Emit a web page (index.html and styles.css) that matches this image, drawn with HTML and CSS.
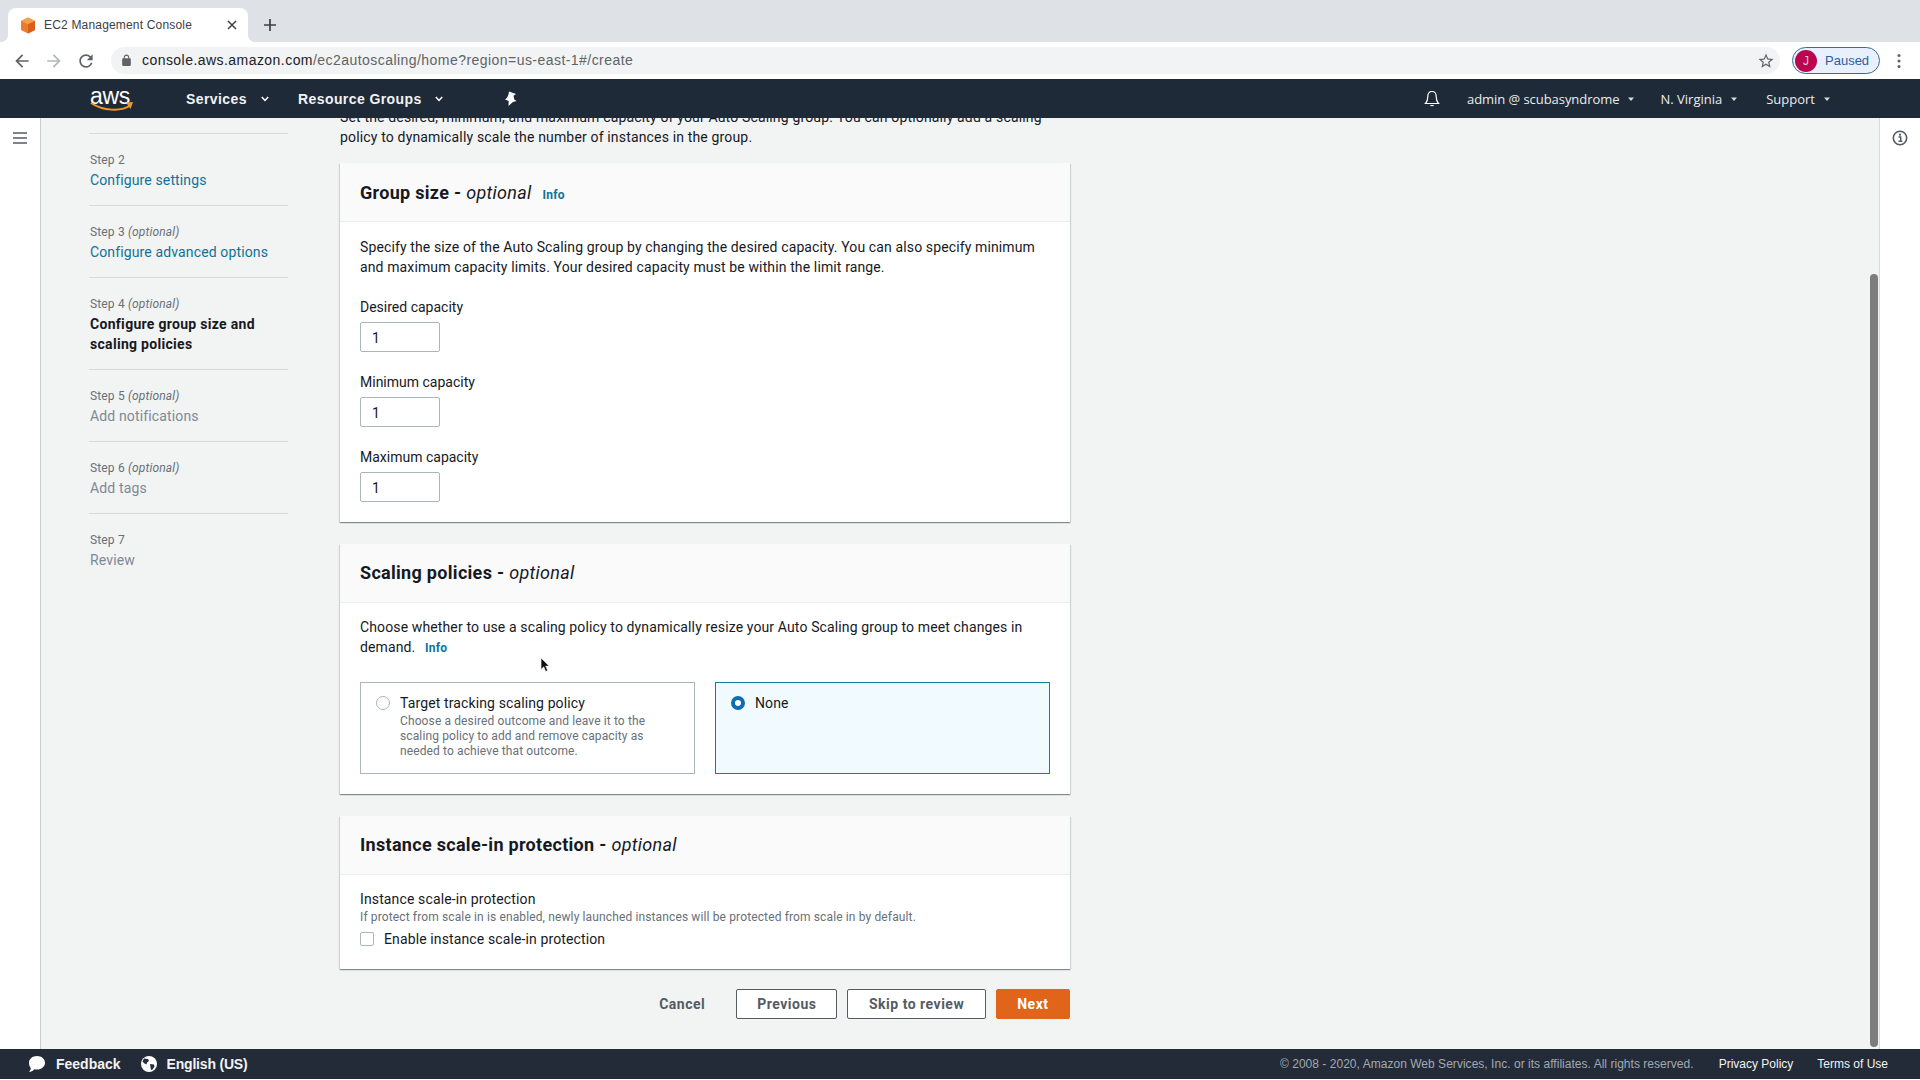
FILE: index.html
```html
<!DOCTYPE html>
<html lang="en">
<head>
<meta charset="utf-8">
<title>EC2 Management Console</title>
<link rel="stylesheet" href="styles.css">
</head>
<body>
<div class="tabstrip">
  <div class="tab">
    <svg class="favicon" viewBox="0 0 16 17"><path fill="#ee7a2c" d="M8 .5l7 3.4v9L8 16.5 1 12.900v-9z"/><path fill="#f6a04d" d="M8 .5l7 3.4L8 7.300 1 3.900z"/><path fill="#d9601c" d="M8 7.300l7-3.400v9L8 16.500z"/></svg>
    <span class="tab-title">EC2 Management Console</span>
    <svg class="tab-x" viewBox="0 0 10 10"><path d="M1 1l8 8M9 1l-8 8" stroke="#3c4043" stroke-width="1.500" fill="none"/></svg>
  </div>
  <svg class="tab-plus" viewBox="0 0 12 12"><path d="M6 0v12M0 6h12" stroke="#3c4043" stroke-width="1.700" fill="none"/></svg>
</div>
<div class="toolbar">
  <svg class="tool-icon" viewBox="0 0 24 24"><path fill="#5f6368" d="M20 11H7.830l5.590-5.590L12 4l-8 8 8 8 1.410-1.410L7.830 13H20v-2z"/></svg>
  <svg class="tool-icon" viewBox="0 0 24 24"><path fill="#b3b6ba" d="M12 4l-1.410 1.410L16.170 11H4v2h12.170l-5.580 5.590L12 20l8-8z"/></svg>
  <svg class="tool-icon" viewBox="0 0 24 24"><path fill="#5f6368" d="M17.650 6.350A7.958 7.958 0 0 0 12 4c-4.420 0-7.990 3.580-7.990 8s3.570 8 7.990 8c3.730 0 6.840-2.550 7.730-6h-2.080A5.990 5.990 0 0 1 12 18c-3.310 0-6-2.690-6-6s2.690-6 6-6c1.660 0 3.140.690 4.220 1.780L13 11h7V4l-2.350 2.350z"/></svg>
  <div class="omnibox">
    <svg class="lock" viewBox="0 0 24 24"><path fill="#5f6368" d="M18 8h-1V6c0-2.760-2.240-5-5-5S7 3.240 7 6v2H6c-1.100 0-2 .9-2 2v10c0 1.100.9 2 2 2h12c1.100 0 2-.9 2-2V10c0-1.100-.9-2-2-2zM9 6c0-1.660 1.340-3 3-3s3 1.340 3 3v2H9V6z"/></svg>
    <span class="url">console.aws.amazon.com<span class="url-path">/ec2autoscaling/home?region=us-east-1#/create</span></span>
    <svg class="star" viewBox="0 0 24 24"><path fill="#5f6368" d="M22 9.240l-7.190-.62L12 2 9.190 8.630 2 9.240l5.460 4.730L5.820 21 12 17.270 18.180 21l-1.630-7.030L22 9.240zM12 15.400l-3.760 2.270 1-4.280-3.320-2.880 4.380-.38L12 6.100l1.710 4.040 4.380.38-3.320 2.880 1 4.280L12 15.400z"/></svg>
  </div>
  <div class="paused"><span class="avatar">J</span><span>Paused</span></div>
  <svg class="dots" viewBox="0 0 4 16"><circle cx="2" cy="2.500" r="1.500" fill="#5f6368"/><circle cx="2" cy="8" r="1.500" fill="#5f6368"/><circle cx="2" cy="13.500" r="1.500" fill="#5f6368"/></svg>
</div>
<header class="awsnav">
  <div class="logo">
    <span class="logo-text">aws</span>
    <svg class="logo-smile" viewBox="0 0 44 11"><path d="M1 2c12 8 30 9 40 2" stroke="#f29a1f" stroke-width="2" fill="none"/><path d="M36 1.500l7-.5-2.500 7" fill="#f29a1f"/></svg>
  </div>
  <span class="nav-bold nav-services">Services</span>
  <svg class="caret caret-services" viewBox="0 0 8 6"><path d="M.8 1l3.200 3.500L7.200 1" stroke="#fff" stroke-width="1.500" fill="none"/></svg>
  <span class="nav-bold nav-rg">Resource Groups</span>
  <svg class="caret caret-rg" viewBox="0 0 8 6"><path d="M.8 1l3.200 3.500L7.200 1" stroke="#fff" stroke-width="1.500" fill="none"/></svg>
  <svg class="pin" viewBox="0 0 14 16"><path fill="#fff" d="M5 .5l7 2.500-2.500 1.800.8 3.700 2.200 1.500-3.500 1-1.800 1.500L4.500 15l.2-5-3.700-1.500L3 6.800l1.500-3.300z"/></svg>
  <span class="nav-spacer"></span>
  <svg class="bell" viewBox="0 0 16 18"><path d="M8 1.500c-3 0-4.200 2.300-4.200 5 0 3.500-.8 5.500-2.300 7h13c-1.500-1.500-2.300-3.500-2.300-7 0-2.700-1.200-5-4.200-5z" stroke="#fff" stroke-width="1.200" fill="none"/><path d="M6 15h4c0 1.600-4 1.600-4 0z" fill="#fff"/></svg>
  <span class="nav-item nav-admin">admin @ scubasyndrome</span>
  <svg class="tri" viewBox="0 0 8 6"><path d="M1 1.500h6L4 5z" fill="#d5dbdb"/></svg>
  <span class="nav-item nav-region">N. Virginia</span>
  <svg class="tri" viewBox="0 0 8 6"><path d="M1 1.500h6L4 5z" fill="#d5dbdb"/></svg>
  <span class="nav-item nav-support">Support</span>
  <svg class="tri" viewBox="0 0 8 6"><path d="M1 1.500h6L4 5z" fill="#d5dbdb"/></svg>
</header>
<main class="main">
  <aside class="drawer-left">
    <svg class="hamburger" viewBox="0 0 14 12"><path d="M0 1h14M0 6h14M0 11h14" stroke="#545b64" stroke-width="1.600" fill="none"/></svg>
  </aside>
  <nav class="steps">
    <ol class="step-list">
      <li class="step"><div class="step-no">Step 2</div><div class="step-link">Configure settings</div></li>
      <li class="step"><div class="step-no">Step 3 <i>(optional)</i></div><div class="step-link">Configure advanced options</div></li>
      <li class="step"><div class="step-no">Step 4 <i>(optional)</i></div><div class="step-current">Configure group size and scaling policies</div></li>
      <li class="step"><div class="step-no">Step 5 <i>(optional)</i></div><div class="step-off">Add notifications</div></li>
      <li class="step"><div class="step-no">Step 6 <i>(optional)</i></div><div class="step-off">Add tags</div></li>
      <li class="step step-last"><div class="step-no">Step 7</div><div class="step-off">Review</div></li>
    </ol>
  </nav>
  <section class="content">
    <p class="intro">Set the desired, minimum, and maximum capacity of your Auto Scaling group. You can optionally add a scaling policy to dynamically scale the number of instances in the group.</p>

    <div class="card card-group">
      <div class="card-head"><h2>Group size - <i>optional</i></h2><a class="info info-head">Info</a></div>
      <div class="card-body">
        <p class="para">Specify the size of the Auto Scaling group by changing the desired capacity. You can also specify minimum and maximum capacity limits. Your desired capacity must be within the limit range.</p>
        <div class="field"><label class="label">Desired capacity</label><div class="input">1</div></div>
        <div class="field"><label class="label">Minimum capacity</label><div class="input">1</div></div>
        <div class="field"><label class="label">Maximum capacity</label><div class="input">1</div></div>
      </div>
    </div>

    <div class="card card-scaling">
      <div class="card-head"><h2>Scaling policies - <i>optional</i></h2></div>
      <div class="card-body">
        <p class="para">Choose whether to use a scaling policy to dynamically resize your Auto Scaling group to meet changes in demand. <a class="info info-inline">Info</a></p>
        <div class="tiles">
          <div class="tile">
            <span class="radio"></span>
            <div><div class="tile-title">Target tracking scaling policy</div><div class="tile-desc">Choose a desired outcome and leave it to the scaling policy to add and remove capacity as needed to achieve that outcome.</div></div>
          </div>
          <div class="tile tile-on">
            <span class="radio radio-on"></span>
            <div><div class="tile-title">None</div></div>
          </div>
        </div>
      </div>
    </div>

    <div class="card card-protect">
      <div class="card-head"><h2>Instance scale-in protection - <i>optional</i></h2></div>
      <div class="card-body">
        <div class="prot-label">Instance scale-in protection</div>
        <div class="prot-desc">If protect from scale in is enabled, newly launched instances will be protected from scale in by default.</div>
        <div class="check-row"><span class="checkbox"></span><span class="check-label">Enable instance scale-in protection</span></div>
      </div>
    </div>

    <div class="actions">
      <span class="btn-link">Cancel</span>
      <span class="btn btn-prev">Previous</span>
      <span class="btn btn-skip">Skip to review</span>
      <span class="btn btn-next">Next</span>
    </div>
  </section>
  <div class="scroll-track"><div class="scroll-thumb"></div></div>
  <aside class="drawer-right">
    <svg class="info-icon" viewBox="0 0 16 16"><circle cx="8" cy="8" r="6.700" stroke="#545b64" stroke-width="1.600" fill="none"/><path d="M6.500 7h2.200v4M6.500 11.300h3.800" stroke="#545b64" stroke-width="1.500" fill="none"/><circle cx="8" cy="4.700" r="1.100" fill="#545b64"/></svg>
  </aside>
  <svg class="cursor" viewBox="0 0 12 18"><path d="M1 1v13l3-3 2.200 5.200 2.200-1-2.200-5H10z" fill="#111" stroke="#fff" stroke-width=".6"/></svg>
</main>
<footer class="footer">
  <svg class="foot-bubble" viewBox="0 0 18 16"><path fill="#fff" d="M9 0c4.500 0 8 2.900 8 6.800s-3.500 6.800-8 6.800c-1 0-1.900-.1-2.700-.4C4.800 15 3 15.800 1 16c1-1 1.600-2.200 1.800-3.800C1.700 11 1 9 1 6.800 1 2.900 4.500 0 9 0z"/></svg>
  <span class="foot-bold foot-feedback">Feedback</span>
  <svg class="foot-globe" viewBox="0 0 16 16"><circle cx="8" cy="8" r="8" fill="#fff"/><path fill="#232f3e" d="M3 2.500l4 .5 1 2-2 1.500-.5 2-2-1-2-2zM9 8l4 .5.5 2-2 3-1.500.5-.5-3z"/></svg>
  <span class="foot-bold foot-lang">English (US)</span>
  <span class="nav-spacer"></span>
  <span class="foot-copy">© 2008 - 2020, Amazon Web Services, Inc. or its affiliates. All rights reserved.</span>
  <span class="foot-link foot-privacy">Privacy Policy</span>
  <span class="foot-link foot-terms">Terms of Use</span>
</footer>
</body>
</html>
```

FILE: styles.css
```css
* { box-sizing: border-box; }
html, body { margin: 0; padding: 0; height: 100%; }
body {
  display: flex;
  flex-direction: column;
  height: 1079px;
  overflow: hidden;
  background: #fff;
  font-family: Roboto, "Liberation Sans", sans-serif;
  font-size: 14px;
  line-height: 20px;
  color: #16191f;
}
svg { display: block; flex: none; }

/* browser chrome */
.tabstrip {
  flex: none;
  height: 42px;
  background: #dee1e6;
  display: flex;
  align-items: flex-end;
  padding-left: 8px;
}
.tab {
  width: 240px;
  height: 34px;
  background: #fff;
  border-radius: 8px 8px 0 0;
  display: flex;
  align-items: center;
  padding-left: 12px;
  position: relative;
}
.tab::before, .tab::after {
  content: "";
  position: absolute;
  bottom: 0;
  width: 8px;
  height: 8px;
}
.tab::before { left: -8px; background: radial-gradient(circle at 0 0, transparent 8px, #fff 8.500px); }
.tab::after { right: -8px; background: radial-gradient(circle at 100% 0, transparent 8px, #fff 8.500px); }
.favicon { width: 16px; height: 17px; }
.tab-title {
  margin-left: 8px;
  font: 12px/16px "Liberation Sans", sans-serif;
  letter-spacing: .18px;
  color: #3c4043;
  white-space: nowrap;
}
.tab-x { width: 10px; height: 10px; margin-left: auto; margin-right: 11px; }
.tab-plus { width: 12px; height: 12px; margin: 0 0 11px 16px; }
.toolbar {
  flex: none;
  height: 37px;
  display: flex;
  align-items: center;
  padding-left: 12px;
  background: #fff;
}
.tool-icon { width: 20px; height: 20px; margin-right: 12px; }
.omnibox {
  width: 1669px;
  height: 27px;
  margin-left: 3px;
  border-radius: 14px;
  background: #f1f3f4;
  display: flex;
  align-items: center;
  padding-left: 9px;
}
.lock { width: 13px; height: 13px; }
.url {
  margin: 0 0 2px 9px;
  font: 14px/20px "Liberation Sans", sans-serif;
  letter-spacing: .45px;
  color: #202124;
  white-space: nowrap;
}
.url-path { color: #5f6368; }
.star { width: 18px; height: 18px; margin-left: auto; margin-right: 5px; }
.paused {
  width: 88px;
  height: 27px;
  margin-left: 12px;
  border: 1px solid #41698f;
  border-radius: 14px;
  background: #e8f0fe;
  display: flex;
  align-items: center;
  padding-left: 2px;
  font: 13px/16px "Liberation Sans", sans-serif;
  color: #2a5e9e;
}
.avatar {
  width: 22px;
  height: 22px;
  border-radius: 50%;
  background: #b9064f;
  color: #f4c6d8;
  font-size: 12px;
  display: flex;
  align-items: center;
  justify-content: center;
  margin-right: 8px;
}
.dots { width: 4px; height: 16px; margin-left: 17px; }

/* aws nav */
.awsnav {
  flex: none;
  height: 39px;
  background: #1f2a38;
  display: flex;
  align-items: center;
  padding-left: 90px;
  color: #fff;
}
.logo { width: 44px; position: relative; height: 26px; }
.logo-text {
  display: block;
  font: 400 23px/20px "Liberation Sans", sans-serif;
  letter-spacing: -.3px;
  color: #fff;
  margin-left: 0;
}
.logo-smile { width: 44px; height: 11px; position: absolute; left: 0; top: 15px; }
.nav-bold { font: 700 14px/20px "Liberation Sans", sans-serif; letter-spacing: .42px; color: #f2f3f3; white-space: nowrap; }
.nav-services { margin-left: 52px; }
.caret { width: 8px; height: 6px; }
.caret-services { margin-left: 14px; }
.nav-rg { margin-left: 29px; }
.caret-rg { margin-left: 13px; }
.pin { width: 14px; height: 16px; margin-left: 61px; }
.nav-spacer { flex: 1; }
.bell { width: 16px; height: 18px; }
.nav-item { font: 13px/20px "Open Sans", sans-serif; color: #eaeded; white-space: nowrap; }
.nav-admin { margin-left: 27px; letter-spacing: -.05px; }
.nav-region { margin-left: 25px; }
.nav-support { margin-left: 28px; }
.tri { width: 8px; height: 6px; margin-left: 8px; }
.awsnav > .tri:last-child { margin-right: 89px; }

/* main */
.main {
  flex: 1;
  min-height: 0;
  display: flex;
  overflow: hidden;
  background: #f2f3f3;
  position: relative;
}
.drawer-left {
  flex: none;
  width: 41px;
  background: #fff;
  border-right: 1px solid #c9cdce;
  padding: 14px 0 0 13px;
}
.hamburger { width: 14px; height: 12px; }
.steps { flex: none; width: 299px; padding: 15px 52px 0 48px; }
.step-list { list-style: none; margin: 0; padding: 0; border-top: 1px solid #d5dbdb; }
.step { padding: 16px 1px 15px 1px; border-bottom: 1px solid #d5dbdb; }
.step-last { border-bottom: 0; }
.step-no { font-size: 12px; letter-spacing: .15px; color: #687078; }
.step-link { color: #0f7299; letter-spacing: .13px; }
.step-current { font-weight: 700; letter-spacing: .3px; color: #16191f; }
.step-off { color: #7d8998; letter-spacing: .14px; }

.content { flex: none; width: 730px; margin-top: -11px; }
.intro { margin: 0 0 16px; letter-spacing: .16px; }
.card {
  background: #fff;
  box-shadow: 0 1px 1px 0 rgba(0,28,36,.35), 1px 1px 1px 0 rgba(0,28,36,.1), -1px 1px 1px 0 rgba(0,28,36,.1);
}
.card-group { height: 359px; margin-bottom: 22px; }
.card-scaling { height: 250px; margin-bottom: 22px; }
.card-protect { height: 153px; }
.card-head {
  height: 59px;
  padding: 0 20px;
  background: #fafafa;
  border-bottom: 1px solid #eaeded;
  display: flex;
  align-items: center;
}
.card-group .card-head { padding-top: 2px; }
h2 { margin: 0; font-size: 18px; line-height: 24px; font-weight: 700; letter-spacing: .3px; }
h2 i { font-weight: 400; }
.card-body { padding: 15px 20px 0; }
.card-scaling .card-body, .card-protect .card-body { padding-top: 14px; }
.para { margin: 0; letter-spacing: .125px; }
.info { font-size: 12px; font-weight: 700; color: #0f7299; letter-spacing: .2px; }
.info-head { margin-left: 11px; margin-top: 4px; }
.info-inline { margin-left: 6px; display: inline-block; line-height: 16px; }
.field { margin-top: 20px; }
.label { display: block; margin-bottom: 5px; }
.input {
  width: 80px;
  height: 30px;
  border: 1px solid #aab7b8;
  border-radius: 2px;
  padding: 5px 11px 0;
  background: #fff;
}
.tiles { display: grid; grid-template-columns: 335px 335px; gap: 20px; margin-top: 25px; }
.tile {
  height: 92px;
  border: 1px solid #aab7b8;
  padding: 10px 15px;
  display: flex;
  align-items: flex-start;
  gap: 10px;
}
.tile-on { background: #f1faff; border-color: #0f7f9a; }
.radio {
  flex: none;
  width: 14px;
  height: 14px;
  margin-top: 3px;
  border-radius: 50%;
  border: 1px solid #aab7b8;
  background: #fff;
}
.radio-on { border: 4px solid #0f6cae; }
.tile-title { letter-spacing: .12px; }
.tile-desc { margin-top: 1px; font-size: 12px; line-height: 15px; letter-spacing: .12px; color: #687078; }
.prot-label { letter-spacing: .13px; }
.prot-desc { font-size: 12px; line-height: 16px; letter-spacing: .13px; color: #687078; }
.check-row { display: flex; align-items: center; gap: 10px; margin-top: 4px; }
.check-label { letter-spacing: .12px; }
.checkbox { width: 14px; height: 14px; border: 1px solid #aab7b8; border-radius: 2px; background: #fff; }
.actions { display: flex; justify-content: flex-end; align-items: center; margin-top: 20px; font-weight: 700; letter-spacing: .5px; }
.btn-link { color: #545b64; margin-right: 21px; }
.btn {
  height: 30px;
  padding: 0 20px;
  border: 1px solid #545b64;
  border-radius: 2px;
  background: #fff;
  color: #545b64;
  line-height: 28px;
  margin-left: 10px;
  white-space: nowrap;
}
.btn-skip { padding: 0 20.500px; }
.btn-next { padding: 0 20.500px; background: #e0651a; border-color: #e0651a; color: #fff; }

.scroll-track { flex: 1; display: flex; justify-content: flex-end; padding-top: 156px; }
.scroll-thumb { width: 8px; height: 773px; margin-right: 1px; background: #7d7d7d; border-radius: 4px; }
.drawer-right {
  flex: none;
  width: 41px;
  background: #fff;
  border-left: 1px solid #d5dbdb;
  padding: 12px 0 0 12px;
}
.info-icon { width: 16px; height: 16px; }
.cursor { position: absolute; left: 540px; top: 539px; width: 11px; height: 16px; }

/* footer */
.footer {
  flex: none;
  height: 30px;
  background: #232b39;
  display: flex;
  align-items: center;
  padding-left: 28px;
  font: 12px/16px "Liberation Sans", sans-serif;
  color: #fff;
}
.foot-bubble { width: 18px; height: 16px; }
.foot-bold { font: 700 14px/20px "Liberation Sans", sans-serif; color: #f2f3f3; }
.foot-feedback { margin-left: 10px; }
.foot-globe { width: 16px; height: 16px; margin-left: 20px; }
.foot-lang { margin-left: 10px; letter-spacing: -.2px; }
.foot-copy { color: #a3a9b0; letter-spacing: .03px; }
.foot-link { color: #f2f3f3; }
.foot-privacy { margin-left: 25px; }
.foot-terms { margin-left: 24px; margin-right: 32px; }
```
